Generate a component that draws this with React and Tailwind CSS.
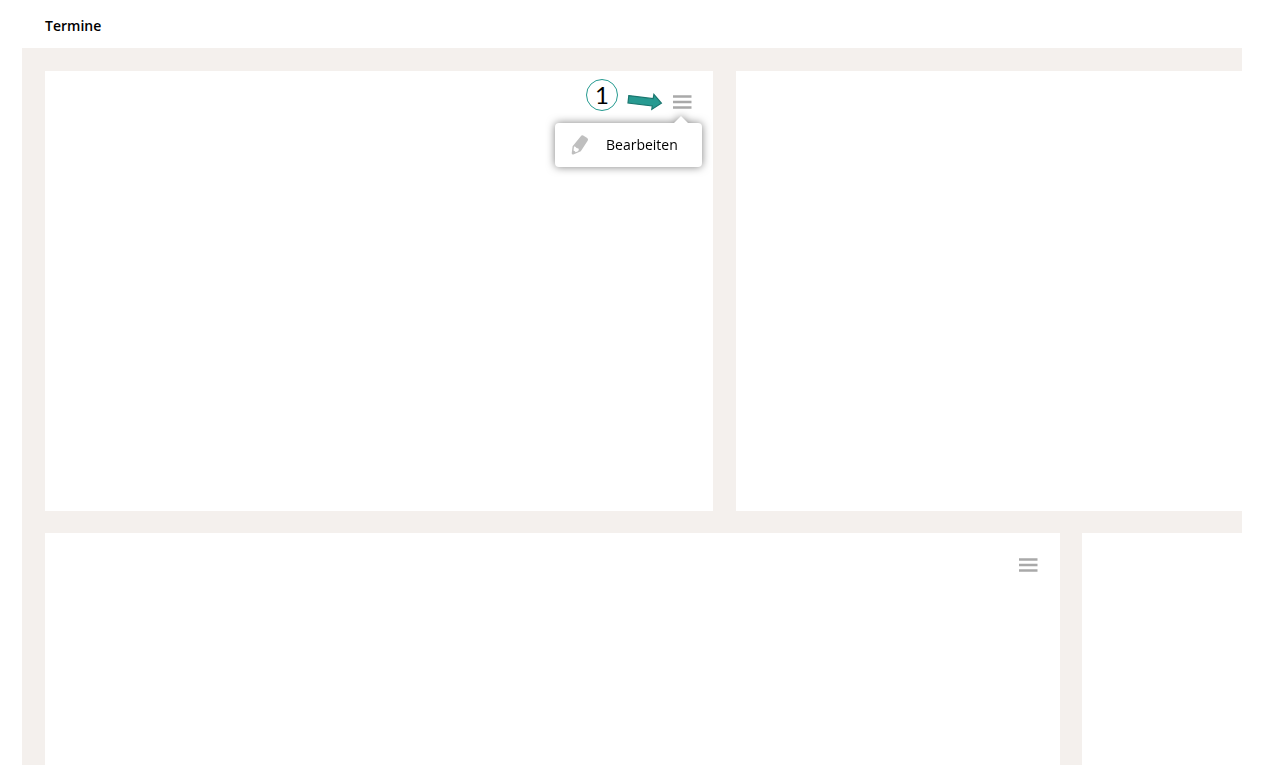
function MenuIcon() {
  return (
    <svg viewBox="0 0 20 16" className="h-4 w-5" aria-hidden="true">
      <path d="M1 2.500h18.500M1 8h18.500M1 13.500h18.500" stroke="#a9a9a9" strokeWidth="2.400" fill="none" />
    </svg>
  );
}

function PencilIcon() {
  return (
    <svg viewBox="0 0 18 20" className="h-5 w-[18px]" aria-hidden="true">
      <path d="M9.800 1.200Q10.600 0 12.200.500L16.200 3Q17.600 4 16.800 5.600L9.800 16.200 2.400 19.400Q.800 19.800.700 18.200L1.600 11.200Z" fill="#bfbfbf" />
      <path d="M3 11.600Q4 11 4.900 12.200Q5.400 13.300 6.600 13.200Q8.200 13.400 7.800 15L7 16.200 4.600 17.200Q4.200 16 2.500 15.400Z" fill="#fff" />
    </svg>
  );
}

function ArrowIcon() {
  return (
    <svg viewBox="0 0 36 18" className="h-[18px] w-9" aria-hidden="true">
      <path d="M1.800 2.600L26.200 5.700 26.900 1.400 34.400 10.200 24.800 16.400 25.300 12.900 1 10Z" fill="#279a91" stroke="#1a766f" strokeWidth="1.200" />
    </svg>
  );
}

function MenuButton({ expanded = false }) {
  return (
    <button type="button" aria-label="Menü" aria-expanded={expanded} className="flex h-8 w-5 items-center">
      <MenuIcon />
    </button>
  );
}

function Card({ children }) {
  return <section className="relative bg-white">{children}</section>;
}

export default function App() {
  return (
    <div className="flex min-h-screen flex-col bg-white px-[22px] pb-[18px] font-['Open_Sans',sans-serif] text-sm text-black">
      <header className="flex h-12 items-center px-[23px] pt-1">
        <h1 className="font-semibold">Termine</h1>
      </header>
      <main className="flex grow flex-col gap-[22px] bg-[#f4f0ed] pt-[23px] pl-[23px]">
        <div className="grid min-h-[440px] grid-cols-[668fr_506fr] gap-[23px]">
          <Card>
            <div className="flex items-start justify-end pt-2 pr-[21px]">
              <span className="flex h-8 w-8 items-center justify-center rounded-full border border-[#259a90] font-['Lato',sans-serif] text-2xl">
                1
              </span>
              <div className="flex items-center pt-[7px] pl-[9px]">
                <ArrowIcon />
                <div className="pl-[9px]">
                  <MenuButton expanded />
                </div>
              </div>
            </div>
            <div className="absolute top-[52px] right-[11px] drop-shadow-[0_0_4px_rgba(0,0,0,0.5)]">
              <svg viewBox="0 0 16 8" className="absolute -top-[7px] right-[13px] h-2 w-4" aria-hidden="true">
                <path d="M0 8L8 0L16 8Z" fill="#fff" />
              </svg>
              <button type="button" className="flex h-11 w-[147px] items-center gap-[17px] rounded-sm bg-white pl-4">
                <PencilIcon />
                Bearbeiten
              </button>
            </div>
          </Card>
          <Card />
        </div>
        <div className="grid grow grid-cols-[1015fr_160fr] gap-[22px]">
          <Card>
            <div className="flex justify-end pt-4 pr-[22px]">
              <MenuButton />
            </div>
          </Card>
          <Card />
        </div>
      </main>
    </div>
  );
}
